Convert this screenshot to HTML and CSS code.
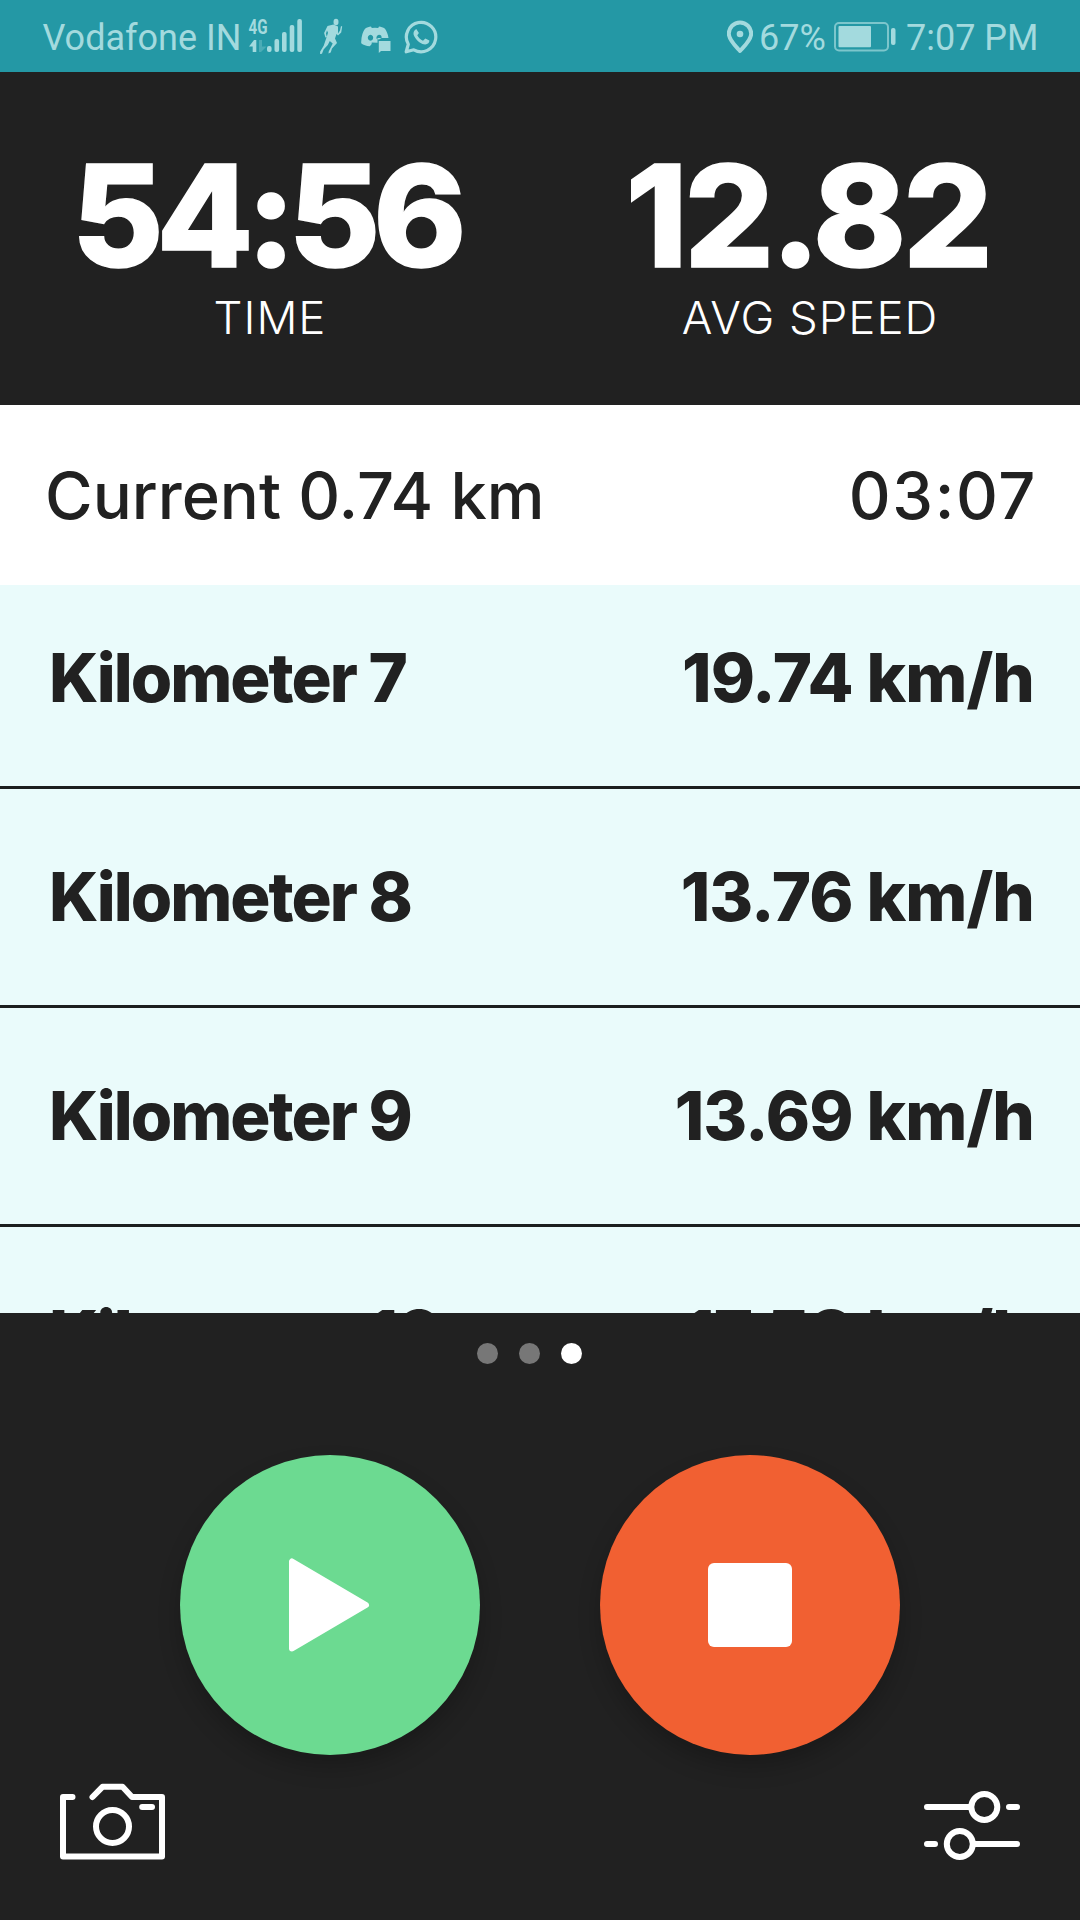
FILE: index.html
```html
<!DOCTYPE html>
<html lang="en">
<head>
<meta charset="utf-8">
<title>Workout</title>
<link rel="stylesheet" href="styles.css">
</head>
<body>
<div class="screen">
  <div class="status">
    <span class="carrier">Vodafone IN</span>
    <svg class="signal" width="56" height="36" viewBox="248 18 56 36">
      <text class="net" x="248.6" y="34" textLength="19" lengthAdjust="spacingAndGlyphs">4G</text>
      <path class="ic" d="M249 46.500L254 40h2.300v12h-3.600v-5.500z"/>
      <path class="ic dim" d="M259 40h3v6.500h4.500L261 52h-2z"/>
      <g class="ic">
        <rect x="267" y="46" width="4.600" height="6" rx="2"/>
        <rect x="274.500" y="39" width="4.600" height="13" rx="2"/>
        <rect x="282" y="32" width="4.600" height="20" rx="2"/>
        <rect x="289.700" y="25" width="4.600" height="27" rx="2"/>
        <rect x="297.300" y="19" width="4.600" height="33" rx="2"/>
      </g>
    </svg>
    <svg class="runner" width="24" height="36" viewBox="319 18 24 36">
      <ellipse class="ic" cx="336" cy="22" rx="2.500" ry="3.300"/>
      <path class="ic" d="M327.500 26l6-1.500 4.500 2v7l2-3 1-4.500 1.200.4-1 6.200-3.200 3-1.500-1.500-1.500 4.500 2 4.500-5 5.500-1.300 3.800-2.200 1.200.2-2.200 4-8-2.900-2.400-2 4-4.200 4.500-1.600 4.200-2 .3.200-2.600 3.500-5.600 2.800-8.200 1.500-4.800-1-2.200-1 3 .8 3.500-1.400.4-1.300-4.500z"/>
    </svg>
    <svg class="discord" width="30" height="27" viewBox="361 26 30 27">
      <path class="ic" fill-rule="evenodd" d="M361.200 42c.1-6 1.900-10.500 3.800-13.200 2-1.400 4-2 6-2.200l.8 1.300q3.200-.4 6.400 0l.8-1.300c2 .2 4 .8 6 2.200 1.700 2.500 3 5.500 3.500 9.200H377.500v4.800l-5.800-.2v1.500l-1.900 2.200c-3.600-.2-6.400-1.300-8.600-3zM370.500 34.800a2.700 3 0 1 0 .01 0zM379 34.800a2.700 3 0 0 0-2.300 4.300l2.300.5 2.600-1.600a2.700 3 0 0 0-2.600-3.200z"/>
      <path class="ic" d="M378.800 41h11.700v10H381l-2.200 2z"/>
    </svg>
    <svg class="whatsapp" width="34" height="34" viewBox="403.500 19.500 34 34">
      <path class="line" d="M405.700 51.300l2.100-7.500a14.700 14.700 0 1 1 5.500 5.500z"/>
      <path class="ic" d="M415.800 28.500c-3 1.500-3.600 5-1.600 8 3 4.700 7 7.500 10.500 7.500 2.600-.2 4.300-1.700 4.200-4l-4.100-2.100-2.300 2.300c-2.600-1.200-4.500-3-5.700-5.400l1.600-2.200z"/>
    </svg>
    <svg class="pin" width="26" height="34" viewBox="727 19.500 26 34">
      <path class="line thick" d="M740 50.500c-4.500-5-11.200-11-11.200-17.300a11.200 11.200 0 0 1 22.400 0c0 6.300-6.700 12.300-11.200 17.300z"/>
      <circle class="ic" cx="740" cy="33.500" r="3.300"/>
    </svg>
    <span class="pct">67%</span>
    <svg class="battery" width="63" height="30" viewBox="834 22 63 30">
      <rect class="cell" x="835" y="23" width="53" height="27.500" rx="4"/>
      <rect class="ic" x="838.500" y="26" width="32.500" height="21.300" rx="1"/>
      <rect class="ic" x="891" y="28" width="4.500" height="17" rx="2"/>
    </svg>
    <span class="clock">7:07 PM</span>
  </div>

  <div class="stats">
    <div class="stat">
      <div class="value time">54:56</div>
      <div class="label">TIME</div>
    </div>
    <div class="stat">
      <div class="value speed">12.82</div>
      <div class="label">AVG SPEED</div>
    </div>
  </div>

  <div class="current">
    <span>Current 0.74 km</span>
    <span class="split-time">03:07</span>
  </div>

  <div class="splits">
    <div class="list">
      <div class="row"><span class="name">Kilometer 7</span><span class="pace">19.74 km/h</span></div>
      <div class="row"><span class="name">Kilometer 8</span><span class="pace">13.76 km/h</span></div>
      <div class="row"><span class="name">Kilometer 9</span><span class="pace">13.69 km/h</span></div>
      <div class="row"><span class="name">Kilometer 10</span><span class="pace">17.58 km/h</span></div>
    </div>
  </div>

  <div class="controls">
    <div class="dots"><i></i><i></i><i class="on"></i></div>
    <div class="buttons">
      <div class="btn play">
        <svg width="300" height="300" viewBox="180 1455 300 300"><path d="M292 1561.500v87L366 1605z" fill="#fff" stroke="#fff" stroke-width="6" stroke-linejoin="round"/></svg>
      </div>
      <div class="btn stop"><div class="square"></div></div>
    </div>
    <div class="tools">
      <svg width="106" height="78" viewBox="59 1783 106 78">
        <g class="tool">
          <path d="M72.500 1797H63v59.500h99V1797h-30l-9.500-10.200h-20L92.500 1797"/>
          <path d="M142.200 1807h9.800"/>
          <circle cx="112.500" cy="1826.500" r="16.500"/>
        </g>
      </svg>
      <svg width="98" height="72" viewBox="923 1790 98 72">
        <g class="tool">
          <circle cx="984.300" cy="1807" r="13"/>
          <path d="M927 1807h44M1009 1807h8"/>
          <circle cx="959.800" cy="1844" r="13"/>
          <path d="M927 1844h8M973 1844h44"/>
        </g>
      </svg>
    </div>
  </div>
</div>
</body>
</html>
```

FILE: styles.css
```css
* { box-sizing: border-box; }
body { margin: 0; }

.screen {
  width: 1080px;
  height: 1920px;
  display: flex;
  flex-direction: column;
  overflow: hidden;
  background: #212121;
  color: #212121;
  font-family: "Inter", "Liberation Sans", sans-serif;
  white-space: nowrap;
}

/* Status bar */
.status {
  height: 72px;
  display: flex;
  align-items: flex-start;
  padding-left: 42.500px;
  background: #2498a5;
  color: #a3dade;
  font: 36px/72px Roboto, sans-serif;
}
.status span { padding-top: 2px; }
.status svg { flex: none; }
.carrier { width: 205.500px; }
.signal { margin: 18px 15px 0 0; }
.runner { margin: 18px 18px 0 0; }
.discord { margin: 26px 12.500px 0 0; }
.whatsapp { margin: 19.500px 0 0; }
.pin { margin: 19.500px 6px 0 289.500px; }
.pct { width: 75px; }
.battery { margin: 22px 9px 0 0; }
.ic { fill: #a3dade; }
.dim { opacity: .3; }
.line { fill: none; stroke: #a3dade; stroke-width: 3.200; stroke-linejoin: round; }
.thick { stroke-width: 4; }
.cell { fill: none; stroke: #7cc6cc; stroke-width: 2; }
.net { fill: #a3dade; font: bold 20px Roboto, sans-serif; }

/* Headline numbers */
.stats {
  height: 333px;
  display: grid;
  grid-template-columns: 1fr 1fr;
  padding-top: 69px;
  color: #fff;
  text-align: center;
}
.value { font-size: 141px; line-height: 150px; font-weight: 800; -webkit-text-stroke: 1.500px #fff; }
.time { padding-right: 9px; letter-spacing: -7.300px; }
.speed { padding-right: 5px; letter-spacing: -3.400px; }
.label { margin-top: 2px; font-size: 45.500px; line-height: 50px; font-weight: 340; letter-spacing: 1px; }

/* Split in progress */
.current {
  height: 180px;
  display: flex;
  justify-content: space-between;
  padding: 1px 43px 0 45px;
  background: #fff;
  font-size: 65px;
  line-height: 180px;
  font-weight: 500;
}
.split-time { letter-spacing: 1.600px; }

/* Finished splits, scrolled part way */
.splits { height: 728px; overflow: hidden; background: #eafbfb; }
.list { margin-top: -15px; }
.row {
  height: 219px;
  display: flex;
  justify-content: space-between;
  padding: 0 46px 0 49px;
  border-bottom: 3px solid #1b1e1e;
  font-size: 67px;
  line-height: 216px;
  font-weight: 780;
}
.name { letter-spacing: -2px; }
.pace { letter-spacing: -.900px; }

/* Controls */
.controls { flex: 1; display: flex; flex-direction: column; }
.dots { display: flex; gap: 21px; padding: 30px 0 0 477px; }
.dots i { width: 21px; height: 21px; border-radius: 50%; background: #777; }
.dots .on { background: #fff; }
.buttons { display: flex; justify-content: center; gap: 120px; margin-top: 91px; }
.btn {
  width: 300px;
  height: 300px;
  display: grid;
  place-items: center;
  border-radius: 50%;
  box-shadow: 0 12px 22px rgba(0, 0, 0, .22);
}
.play { background: #6cda91; }
.stop { background: #f16032; }
.square { width: 84px; height: 84px; border-radius: 6px; background: #fff; }
.tools { display: flex; justify-content: space-between; margin-top: 28px; padding: 0 59px; }
.tools svg:last-child { margin-top: 7px; }
.tool { fill: none; stroke: #fff; stroke-width: 6; stroke-linecap: round; stroke-linejoin: round; }
```
